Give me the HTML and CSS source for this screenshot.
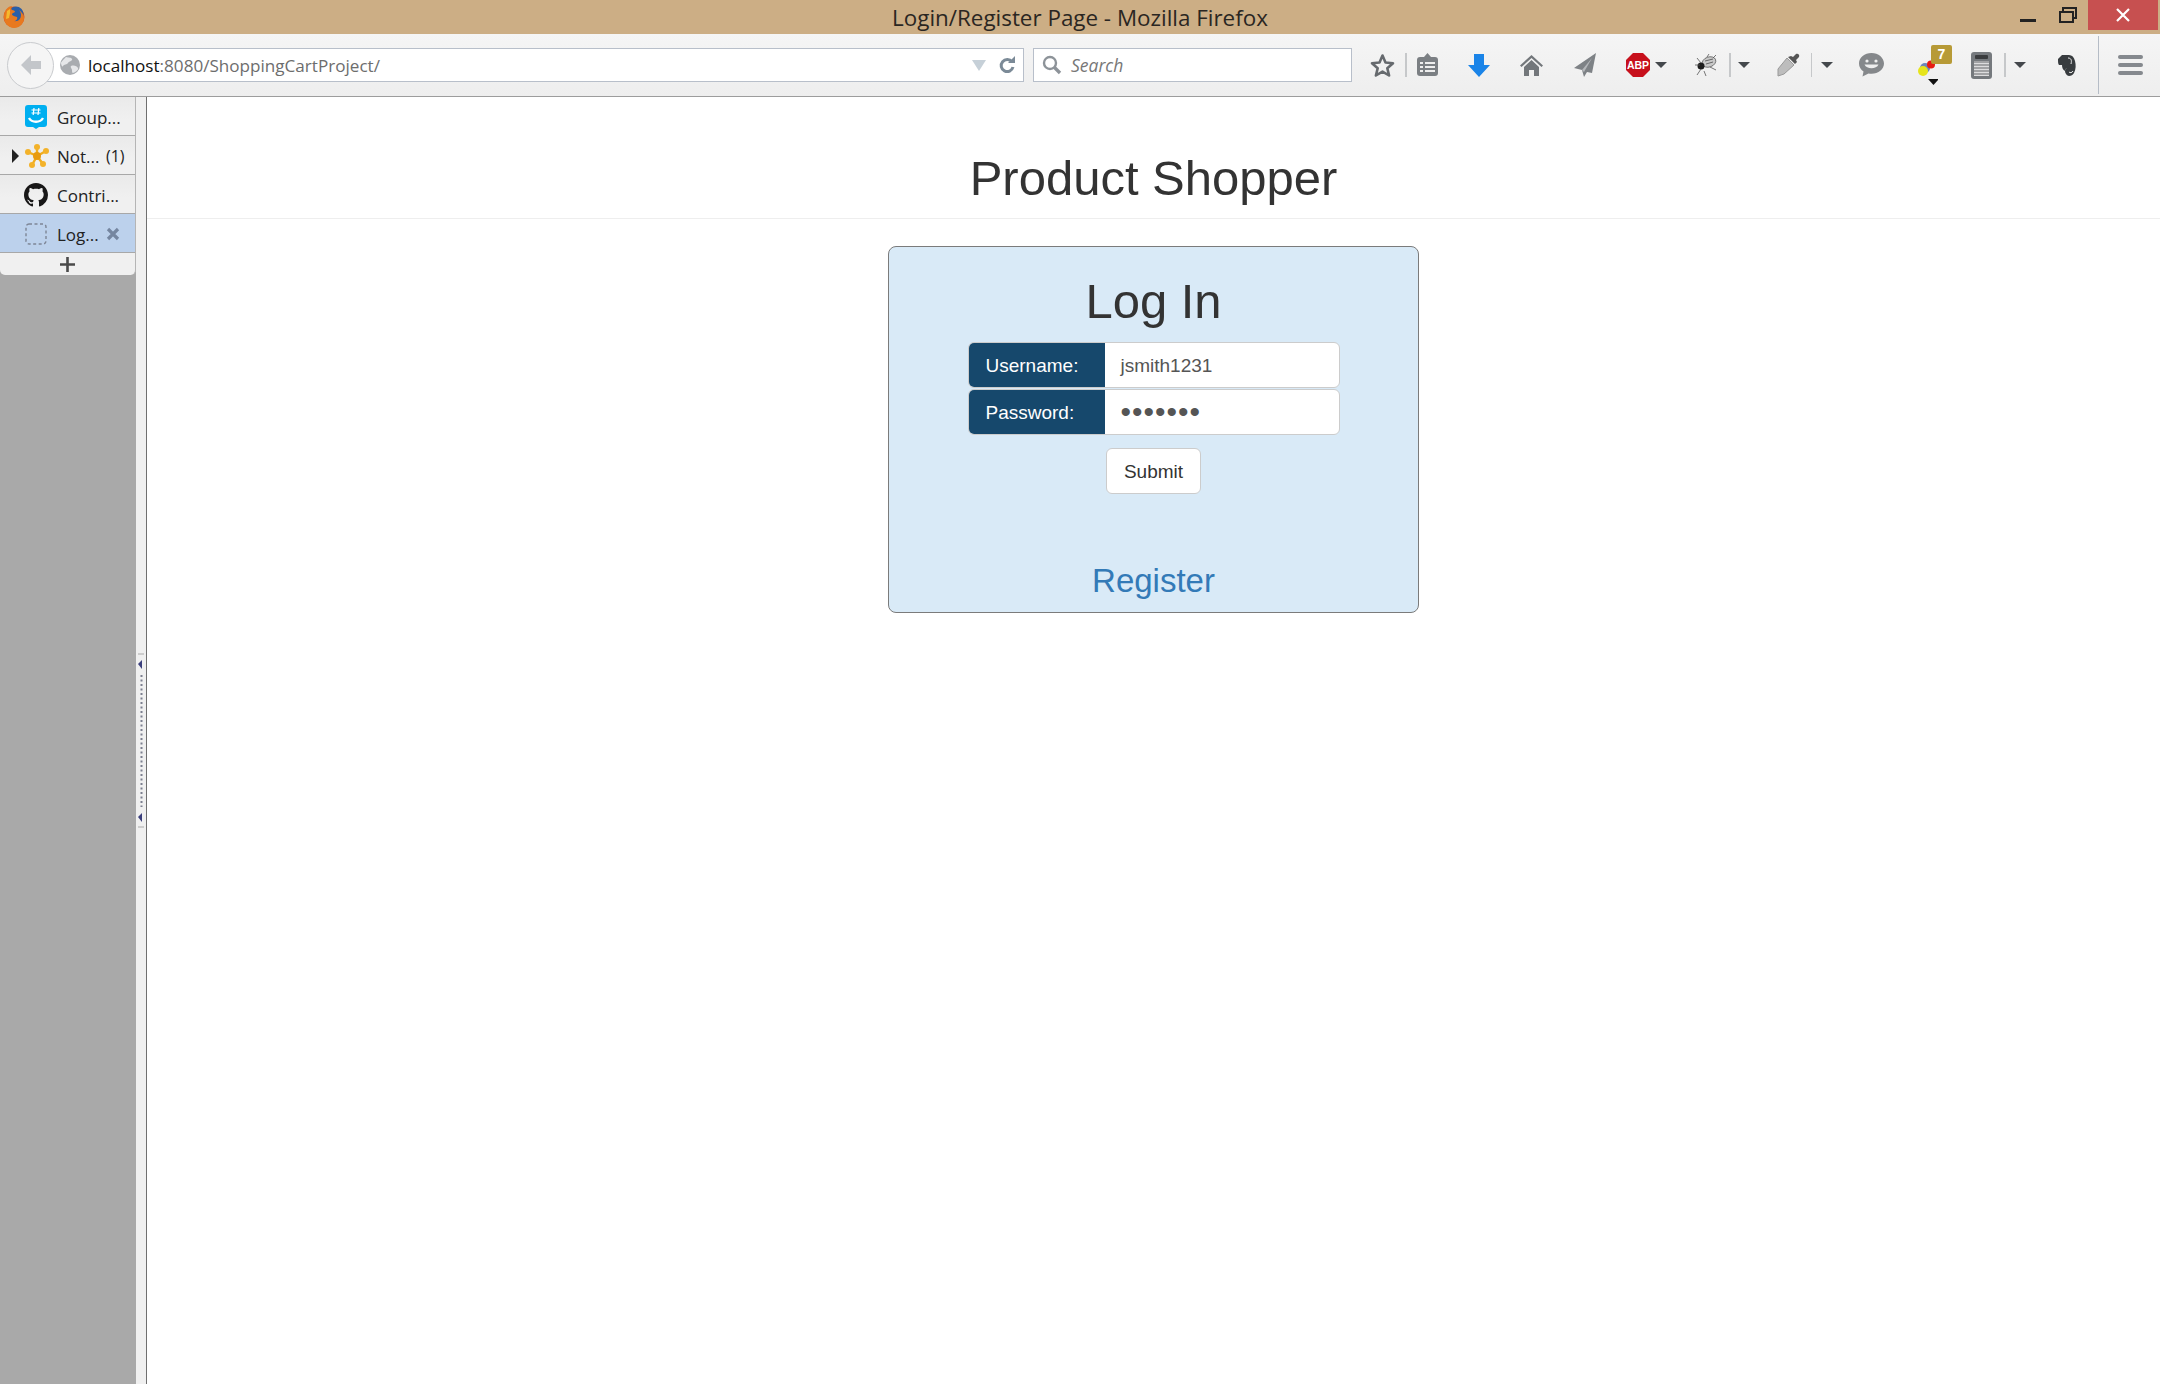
FILE: index.html
```html
<!DOCTYPE html>
<html lang="en">

<head>
    <meta charset="UTF-8">
    <meta name="viewport" content="width=device-width, initial-scale=1.0">
    <link rel="stylesheet" href="styles.css">
    <title>Login/Register Page - Mozilla Firefox</title>
</head>

<body>
<div class="window">
    <!-- title bar -->
    <div class="titlebar">
        <div class="title-left">
            <svg width="22" height="24" viewBox="0 0 22 24">
                <circle cx="11" cy="12" r="10.5" fill="#d9541e"/>
                <circle cx="13" cy="9" r="7.5" fill="#2a5fa8"/>
                <path d="M1 10C2 4 6 1 9 1c-1 2-1 3 0 4 2 0 3 1 3 2-1 1-3 1-3 2 0 2 3 2 5 3 1 2-1 4-3 4 4 1 7-2 7-6 0-2-1-4-2-5 3 2 5 5 5 8 0 6-5 10-10 10C6 23 0 18 1 10z" fill="#e8791f"/>
                <path d="M4 6l3-2 0 4-1 5-3 1z" fill="#f5b92e"/>
            </svg>
        </div>
        <div class="title-text">Login/Register Page - Mozilla Firefox</div>
        <div class="title-right">
            <div class="win-min"></div>
            <svg class="win-restore" width="18" height="16" viewBox="0 0 18 16">
                <path d="M4 4V1h13v10h-3" fill="none" stroke="#222" stroke-width="2"/>
                <rect x="1" y="5" width="13" height="10" fill="none" stroke="#222" stroke-width="2"/>
                <rect x="1" y="4" width="13" height="2" fill="#222"/>
                <rect x="4" y="0" width="14" height="2" fill="#222"/>
            </svg>
            <div class="win-close">
                <svg width="14" height="14" viewBox="0 0 14 14">
                    <path d="M1 1l12 12M13 1L1 13" stroke="#fff" stroke-width="2.2"/>
                </svg>
            </div>
        </div>
    </div>

    <!-- toolbar -->
    <div class="toolbar">
        <div class="back-btn">
            <svg width="22" height="22" viewBox="0 0 22 22">
                <path d="M11 1L1 11l10 10v-6h10V7H11z" fill="#c3c6ca"/>
            </svg>
        </div>
        <div class="urlbar">
            <svg class="globe" width="22" height="20" viewBox="0 0 22 20">
                <circle cx="11" cy="10" r="10" fill="#a9acb0"/>
                <path d="M7 2c3 1 5 0 6 2s-3 2-4 4-4 1-5 3-2-2-2-3 3-4 5-6zM12 11c3-1 6 0 7 2s-4 5-5 5-1-2-1-3-2-3-1-4z" fill="#e6e7e9"/>
            </svg>
            <div class="url-text"><span class="url-host">localhost</span>:8080/ShoppingCartProject/</div>
            <svg class="url-drop" width="14" height="11" viewBox="0 0 14 11">
                <path d="M0 0h14L7 11z" fill="#c6d0d8"/>
            </svg>
            <svg class="url-reload" width="16" height="18" viewBox="0 0 16 18">
                <path d="M13 6a6 6 0 1 0 1 5" fill="none" stroke="#7b8a97" stroke-width="3"/>
                <path d="M9 7h7V0z" fill="#7b8a97"/>
            </svg>
        </div>
        <div class="searchbar">
            <svg width="20" height="20" viewBox="0 0 20 20">
                <circle cx="8" cy="8" r="6" fill="none" stroke="#8d9399" stroke-width="2.4"/>
                <path d="M12 12l6 6" stroke="#8d9399" stroke-width="3.4"/>
            </svg>
            <span class="search-text">Search</span>
        </div>

        <svg class="tb-star" width="25" height="25" viewBox="0 0 25 25">
            <path d="M12.5 2.5l3 7 7.5.7-5.7 5 1.8 7.3-6.600-3.900-6.600 3.900 1.800-7.300-5.700-5 7.500-.7z" fill="none" stroke="#666a6e" stroke-width="2.6" stroke-linejoin="round"/>
        </svg>
        <div class="tb-sep tb-sep-star"></div>
        <svg class="tb-list" width="21" height="24" viewBox="0 0 21 24">
            <rect x="0" y="4" width="21" height="19" rx="3" fill="#7b7f83"/>
            <path d="M7 4l3.500-4 3.500 4z" fill="#7b7f83"/>
            <path d="M3 9h3v2H3zM8 9h10v2H8zM3 13h3v2H3zM8 13h10v2H8zM3 17h3v2H3zM8 17h10v2H8z" fill="#eeeeee"/>
        </svg>
        <svg class="tb-down" width="22" height="23" viewBox="0 0 22 23">
            <path d="M6 0h10v11h6L11 23 0 11h6z" fill="#1a84e8"/>
        </svg>
        <svg class="tb-home" width="23" height="23" viewBox="0 0 23 23">
            <path d="M11.500 1L0 11.500l1.500 1.500 10-9 10 9 1.500-1.500z" fill="#73777b"/>
            <path d="M4 13l7.500-7 7.500 7v9h-5v-6H9v6H4z" fill="#73777b"/>
        </svg>
        <svg class="tb-plane" width="22" height="24" viewBox="0 0 22 24">
            <path d="M22 0L0 15l8 2 2 7 3-5 5 1z" fill="#7e8286"/>
            <path d="M18 5L8 17l2 2z" fill="#b5b8bb"/>
        </svg>
        <svg class="tb-abp" width="24" height="24" viewBox="0 0 24 24">
            <path d="M7 0h10l7 7v10l-7 7H7l-7-7V7z" fill="#c7101c"/>
            <text x="12" y="16" class="abp-text">ABP</text>
        </svg>
        <div class="caret caret-abp"></div>
        <svg class="tb-bug" width="24" height="24" viewBox="0 0 24 24">
            <ellipse cx="15" cy="9" rx="7" ry="5" fill="#c9c9c9" stroke="#555" stroke-width=".7" transform="rotate(-20 15 9)"/>
            <ellipse cx="7" cy="13" rx="3.500" ry="3.500" fill="#1d1d1d"/>
            <path d="M3 5l4 5M1 12h5M3 22l4-6M10 18l2 5M16 14l6 3M13 4l2-3M19 5l3-3" stroke="#555" stroke-width=".8" fill="none"/>
            <path d="M11 8l8-2M12 11l7-2" stroke="#666" stroke-width="1"/>
        </svg>
        <div class="tb-sep tb-sep-bug"></div>
        <div class="caret caret-bug"></div>
        <svg class="tb-dropper" width="24" height="24" viewBox="0 0 24 24">
            <path d="M11 5l7 7L8 21l-6 2 0-7z" fill="#bdbdbd" stroke="#999"/>
            <path d="M12 4l7 7 2-2-1-2 3-3c1-2-1-4-3-3l-3 3-2-1z" fill="#555"/>
        </svg>
        <div class="tb-sep tb-sep-dropper"></div>
        <div class="caret caret-dropper"></div>
        <svg class="tb-chat" width="25" height="24" viewBox="0 0 25 24">
            <path d="M12.500 0C5.600 0 0 4.600 0 10.500c0 3.300 1.800 6.200 4.500 8.100L3.500 23.500l6-3.100c1 .2 2 .3 3 .3 6.900 0 12.500-4.500 12.500-10.200S19.400 0 12.500 0z" fill="#85888b"/>
            <circle cx="8" cy="8" r="1.600" fill="#eee"/>
            <circle cx="17" cy="8" r="1.600" fill="#eee"/>
            <path d="M5.500 11.500c2 5 12 5 14 0z" fill="#eee"/>
        </svg>
        <div class="tb-dots">
            <svg width="20" height="28" viewBox="0 0 20 28">
                <circle cx="7" cy="9" r="5" fill="#6d86b8"/>
                <circle cx="13" cy="5.500" r="4" fill="#e81c12"/>
                <circle cx="5" cy="12" r="5" fill="#e6e41c"/>
                <path d="M10 20h11l-5.500 6z" fill="#111"/>
            </svg>
            <div class="tb-badge">7</div>
        </div>
        <svg class="tb-clip" width="21" height="27" viewBox="0 0 21 27">
            <rect x="0" y="0" width="21" height="27" rx="3" fill="#75797d"/>
            <rect x="4" y="3" width="13" height="4" rx="1" fill="#3a3c3e"/>
            <path d="M3 9h15v15H3z" fill="#dcdcdd"/>
            <path d="M3 10h15M3 13h15M3 16h15M3 19h15M3 22h15" stroke="#66696c" stroke-width="1.200"/>
        </svg>
        <div class="tb-sep tb-sep-clip"></div>
        <div class="caret caret-clip"></div>
        <svg class="tb-note" width="18" height="22" viewBox="0 0 18 22">
            <path d="M4 1l-4 4c0 3 0 5 1 6h3c0 3 1 5 3 6 0-2 1-3 3-2-1-1-3 0-3 2s2 5 4 5 4-1 5-3c2-4 2-8 1-12C16 3 14 1 11 1z" fill="#383c3f"/>
            <path d="M10 4c3 0 4 2 3 6" fill="none" stroke="#eee" stroke-width="1"/>
            <path d="M11 18c1 1 3 1 4-1" fill="none" stroke="#eee" stroke-width="1"/>
        </svg>
        <div class="tb-sep-tall"></div>
        <div class="tb-menu">
            <div class="menu-bar"></div>
            <div class="menu-bar"></div>
            <div class="menu-bar"></div>
        </div>
    </div>

    <div class="main">
        <!-- tabs sidebar -->
        <div class="sidebar">
            <div class="tabs">
                <div class="tab">
                    <span class="twisty"></span>
                    <svg class="tab-icon" width="22" height="24" viewBox="0 0 22 24">
                        <path d="M3 0h16c2 0 3 1 3 3v16c0 2-1 3-3 3h-5l-3 2-3-2H3c-2 0-3-1-3-3V3c0-2 1-3 3-3z" fill="#00aff0"/>
                        <path d="M9 3l-.8 7M13.800 3l-.8 7M6.500 5h9M6.500 8h9" stroke="#fff" stroke-width="1.200"/>
                        <path d="M4 13c3 5 11 5 14 0" fill="none" stroke="#fff" stroke-width="2.400"/>
                    </svg>
                    <span class="tab-label">Group...</span>
                </div>
                <div class="tab">
                    <span class="twisty twisty-on"></span>
                    <svg class="tab-icon" width="24" height="24" viewBox="0 0 24 24">
                        <path d="M12 12L12 3M12 12L3 8M12 12L21 7M12 12L7 21M12 12L18 20" stroke="#f0ad1e" stroke-width="2.400"/>
                        <circle cx="12" cy="12" r="4" fill="#e89a10"/>
                        <circle cx="12" cy="3" r="3" fill="#f3b22a"/>
                        <circle cx="3" cy="8" r="3" fill="#f3b22a"/>
                        <circle cx="21" cy="7" r="3" fill="#f3b22a"/>
                        <circle cx="7" cy="21" r="3" fill="#f3b22a"/>
                        <circle cx="18" cy="20" r="3" fill="#f3b22a"/>
                    </svg>
                    <span class="tab-label tab-label-notes">Not...</span>
                    <span class="tab-count">(1)</span>
                </div>
                <div class="tab">
                    <span class="twisty"></span>
                    <svg class="tab-icon tab-icon-big" width="24" height="24" viewBox="0 0 16 16">
                        <path d="M8 0C3.580 0 0 3.580 0 8c0 3.540 2.290 6.530 5.470 7.590.4.070.55-.17.55-.38 0-.19-.01-.82-.01-1.490-2.010.37-2.530-.49-2.690-.94-.09-.23-.48-.94-.82-1.130-.28-.15-.68-.52-.01-.53.63-.01 1.080.58 1.230.82.72 1.210 1.870.87 2.330.66.070-.52.28-.87.51-1.070-1.780-.2-3.640-.89-3.640-3.950 0-.87.31-1.590.82-2.150-.08-.2-.36-1.020.08-2.120 0 0 .67-.21 2.200.82.64-.18 1.320-.27 2-.27.68 0 1.360.09 2 .27 1.530-1.040 2.200-.82 2.200-.82.44 1.100.16 1.920.08 2.120.51.56.82 1.270.82 2.150 0 3.070-1.870 3.750-3.650 3.950.29.25.54.73.54 1.480 0 1.070-.01 1.930-.01 2.200 0 .21.15.46.55.38A8.013 8.013 0 0 0 16 8c0-4.420-3.580-8-8-8z" fill="#181717"/>
                    </svg>
                    <span class="tab-label">Contri...</span>
                </div>
                <div class="tab tab-active">
                    <span class="twisty"></span>
                    <svg class="tab-icon" width="22" height="22" viewBox="0 0 22 22">
                        <rect x="1" y="1" width="20" height="20" rx="3" fill="none" stroke="#7d8595" stroke-width="1.400" stroke-dasharray="3 2.500"/>
                    </svg>
                    <span class="tab-label tab-label-short">Log...</span>
                    <svg class="tab-close" width="14" height="14" viewBox="0 0 14 14">
                        <path d="M2 2l10 10M12 2L2 12" stroke="#7586a0" stroke-width="3.200"/>
                    </svg>
                </div>
                <div class="tab-new">
                    <svg width="15" height="15" viewBox="0 0 15 15">
                        <path d="M7.500 0v15M0 7.500h15" stroke="#4a4a4a" stroke-width="2.600"/>
                    </svg>
                </div>
            </div>
        </div>
        <div class="splitter">
            <svg width="10" height="176" viewBox="0 0 10 176">
                <path d="M2 0h6" stroke="#aaa" transform="translate(0 1)"/>
                <path d="M2 11l4-4v9z" fill="#3b3f7c"/>
                <path d="M5.500 22v132" stroke="#7d8090" stroke-width="2" stroke-dasharray="2 2.500"/>
                <path d="M2 164l4-4v9z" fill="#3b3f7c"/>
                <path d="M2 0h6" stroke="#aaa" transform="translate(0 174)"/>
            </svg>
        </div>

        <!-- page -->
        <div class="page">
            <div class="page-header">
                <h1 class="page-title">Product Shopper</h1>
            </div>
            <div class="login-card">
                <h1 class="card-title">Log In</h1>
                <div class="field">
                    <span class="field-label">Username:</span>
                    <span class="field-input">jsmith1231</span>
                </div>
                <div class="field">
                    <span class="field-label">Password:</span>
                    <span class="field-input field-pass">&#8226;&#8226;&#8226;&#8226;&#8226;&#8226;&#8226;</span>
                </div>
                <div class="submit-btn">Submit</div>
                <a class="register-link" href="#">Register</a>
            </div>
        </div>
    </div>
</div>
</body>

</html>
```
FILE: styles.css
```css
* {
    margin: 0;
    padding: 0;
    box-sizing: border-box;
}

html, body {
    height: 100%;
    overflow: hidden;
}

body {
    font-family: "Liberation Sans", Arial, sans-serif;
    color: #333;
    background: #fff;
}

svg {
    display: block;
    flex: none;
}

.window {
    height: 1384px;
    display: flex;
    flex-direction: column;
}

/* title bar */
.titlebar {
    height: 34px;
    flex: none;
    background: #ccae85;
    display: grid;
    grid-template-columns: 1fr auto 1fr;
}

.title-left {
    padding: 5px 0 0 3px;
}

.title-text {
    font-family: "Open Sans", sans-serif;
    font-size: 22.400px;
    line-height: 35px;
    color: #2a2622;
}

.title-right {
    display: flex;
    justify-content: flex-end;
    align-items: flex-start;
}

.win-min {
    width: 16px;
    height: 3px;
    background: #222;
    margin-top: 19px;
}

.win-restore {
    margin: 7px 11px 0 23px;
}

.win-close {
    width: 70px;
    height: 30px;
    margin-right: 2px;
    background: #c75050;
    display: flex;
    align-items: center;
    justify-content: center;
}

/* toolbar */
.toolbar {
    height: 63px;
    flex: none;
    background: linear-gradient(#f5f5f5, #eeeeee);
    border-bottom: 1px solid #9c9c9c;
    display: flex;
    align-items: center;
    padding-left: 7px;
}

.back-btn {
    width: 47px;
    height: 47px;
    margin-right: -14px;
    border-radius: 50%;
    background: #f5f5f5;
    border: 1px solid #c9cbce;
    display: flex;
    align-items: center;
    justify-content: center;
    position: relative;
    z-index: 1;
}

.urlbar {
    width: 984px;
    height: 34px;
    background: #fff;
    border: 1px solid #b8bfca;
    display: flex;
    align-items: center;
    padding-left: 18px;
}

.url-text {
    font-family: "Open Sans", sans-serif;
    font-size: 17.100px;
    color: #6d6d6d;
    margin-left: 7px;
    flex: 1;
}

.url-host {
    color: #111;
}

.url-drop {
    margin-right: 13px;
}

.url-reload {
    margin-right: 8px;
}

.searchbar {
    width: 319px;
    height: 34px;
    margin-left: 9px;
    background: #fff;
    border: 1px solid #b8bfca;
    display: flex;
    align-items: center;
    padding-left: 8px;
}

.search-text {
    font-family: "Open Sans", sans-serif;
    font-style: italic;
    font-size: 17.500px;
    color: #777;
    margin-left: 9px;
}

.tb-sep {
    width: 2px;
    height: 24px;
    background: #c6c8ca;
}

.tb-sep-tall {
    width: 1px;
    height: 58px;
    margin-left: 22px;
    background: #b5bcc6;
}

.caret {
    border-left: 6px solid transparent;
    border-right: 6px solid transparent;
    border-top: 6px solid #44484c;
}

.abp-text {
    font-family: "Liberation Sans", Arial, sans-serif;
    font-size: 10.500px;
    font-weight: bold;
    fill: #fff;
    text-anchor: middle;
}

.tb-star { margin-left: 18px; }
.tb-sep-star { margin-left: 10px; }
.tb-list { margin-left: 10px; }
.tb-down { margin-left: 30px; }
.tb-home { margin-left: 30px; }
.tb-plane { margin-left: 31px; }
.tb-abp { margin-left: 30px; }
.caret-abp { margin-left: 5px; }
.tb-bug { margin-left: 27px; }
.tb-sep-bug { margin-left: 11px; }
.caret-bug { margin-left: 7px; }
.tb-dropper { margin-left: 26px; }
.tb-sep-dropper { margin-left: 11px; width: 1px; }
.caret-dropper { margin-left: 9px; }
.tb-chat { margin-left: 26px; }
.tb-clip { margin-left: 19px; }
.tb-sep-clip { margin-left: 12px; }
.caret-clip { margin-left: 8px; }
.tb-note { margin-left: 32px; }

.tb-dots {
    width: 34px;
    height: 40px;
    margin-left: 34px;
    padding-top: 14px;
    position: relative;
}

.tb-badge {
    position: absolute;
    top: 0;
    right: 0;
    width: 21px;
    height: 19px;
    border-radius: 2px;
    background: #b79a36;
    color: #fff;
    font-size: 14px;
    font-weight: bold;
    line-height: 19px;
    text-align: center;
}

.tb-menu {
    width: 25px;
    margin-left: 19px;
    display: flex;
    flex-direction: column;
    gap: 4px;
}

.menu-bar {
    height: 4px;
    border-radius: 2px;
    background: #85898e;
}

/* sidebar and page */
.main {
    flex: 1;
    display: flex;
    min-height: 0;
}

.sidebar {
    width: 136px;
    flex: none;
    background: #a9a9a9;
}

.tabs {
    background: #f0f0f0;
    border-radius: 0 0 5px 5px;
    border-right: 1px solid #b5b5b5;
}

.tab {
    height: 39px;
    border-bottom: 1px solid #a8a8a8;
    display: flex;
    align-items: center;
    padding: 2px 0 0 12px;
    font-family: "Open Sans", sans-serif;
    font-size: 17px;
    color: #222;
    background: linear-gradient(#eaeaea, #f0f0f0 60%);
}

.tab-active {
    background: #bcd1ec;
}

.twisty {
    width: 8px;
    height: 14px;
    flex: none;
}

.twisty-on {
    border-left: 7px solid #222;
    border-top: 7px solid transparent;
    border-bottom: 7px solid transparent;
}

.tab-icon {
    margin-left: 5px;
}

.tab-icon-big {
    margin-left: 4px;
}

.tab-label {
    margin-left: 10px;
    white-space: nowrap;
}

.tab-icon-big + .tab-label {
    margin-left: 9px;
}

.tab-label-short {
    width: 49px;
}

.tab-label-notes {
    width: 49px;
    margin-left: 8px;
}

.tab-count {
    font-size: 16px;
}

.tab-new {
    height: 22px;
    display: flex;
    align-items: center;
    justify-content: center;
}

.splitter {
    width: 11px;
    flex: none;
    background: #f0f0f0;
    border-right: 1px solid #6f6f6f;
    display: flex;
    align-items: center;
}

.page {
    flex: 1;
    background: #fff;
    display: flex;
    flex-direction: column;
    align-items: center;
}

.page-header {
    align-self: stretch;
    height: 122px;
    border-bottom: 1px solid #eeeeee;
    text-align: center;
}

.page-title {
    font-size: 49px;
    font-weight: 500;
    line-height: 55px;
    padding-top: 54px;
    box-sizing: content-box;
}

.login-card {
    width: 531px;
    height: 367px;
    margin-top: 27px;
    background: #d9eaf7;
    border: 1px solid #7b7b7b;
    border-radius: 8px;
    display: flex;
    flex-direction: column;
    align-items: center;
}

.card-title {
    font-size: 49px;
    font-weight: 500;
    line-height: 55px;
    margin-top: 27px;
    margin-bottom: 13px;
}

.field {
    width: 372px;
    height: 46px;
    display: flex;
    border: 1px solid #cccccc;
    border-radius: 6px;
    background: #fff;
    overflow: hidden;
    font-size: 19px;
}

.field-label {
    width: 136px;
    background: #16486c;
    color: #fff;
    padding-left: 17px;
    line-height: 46px;
}

.field + .field .field-label {
    line-height: 45px;
}

.field-input {
    flex: 1;
    padding-left: 16px;
    line-height: 46px;
    color: #555;
}

.field-pass {
    font-size: 30px;
    letter-spacing: 1px;
    line-height: 44px;
}

.field + .field {
    margin-top: 1px;
}

.submit-btn {
    width: 95px;
    height: 46px;
    margin-top: 13px;
    background: #fff;
    border: 1px solid #cccccc;
    border-radius: 6px;
    font-size: 19px;
    line-height: 45px;
    text-align: center;
}

.register-link {
    margin-top: 68px;
    font-size: 33px;
    line-height: 37px;
    color: #337ab7;
    text-decoration: none;
}
```
